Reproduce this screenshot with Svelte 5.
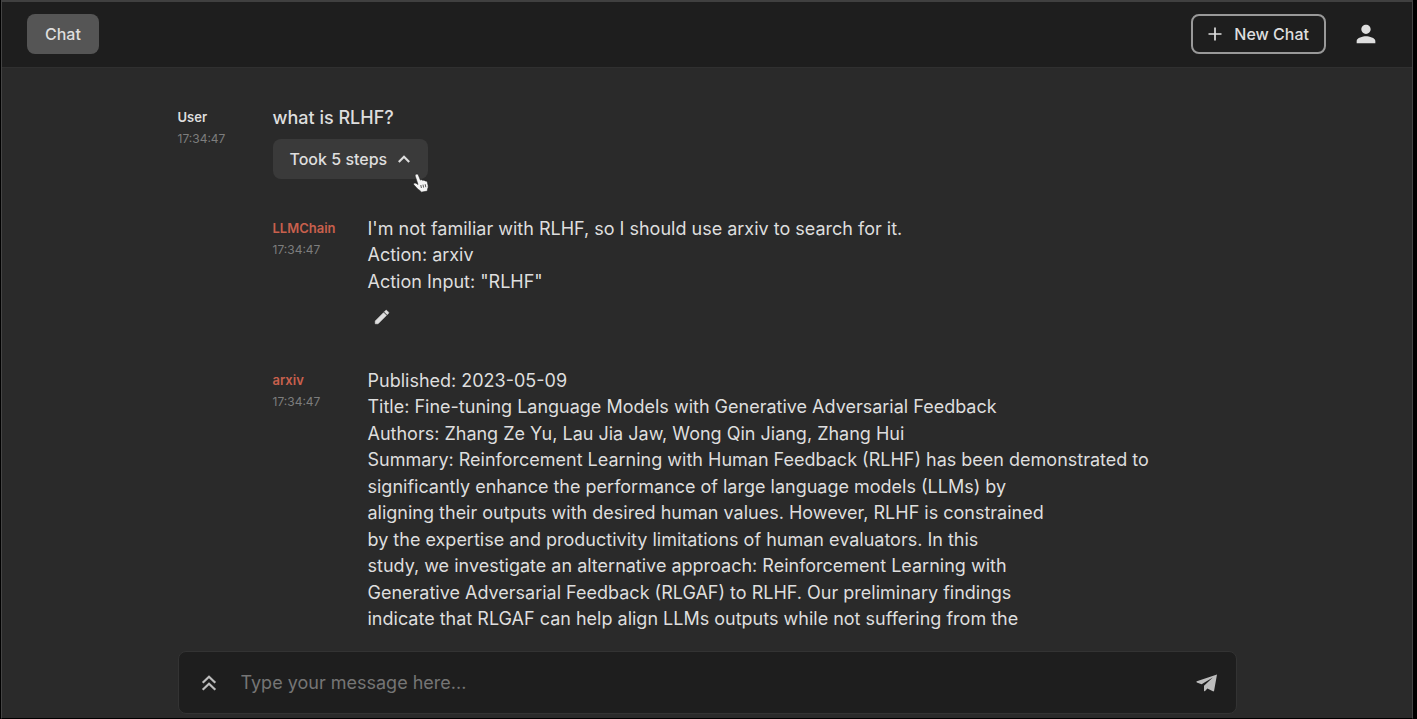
<script>
  let draft = $state('');

  const steps = [
    {
      author: 'LLMChain',
      time: '17:34:47',
      editable: true,
      lines: [
        "I'm not familiar with RLHF, so I should use arxiv to search for it.",
        'Action: arxiv',
        'Action Input: "RLHF"',
      ],
    },
    {
      author: 'arxiv',
      time: '17:34:47',
      editable: false,
      lines: [
        'Published: 2023-05-09',
        'Title: Fine-tuning Language Models with Generative Adversarial Feedback',
        'Authors: Zhang Ze Yu, Lau Jia Jaw, Wong Qin Jiang, Zhang Hui',
        'Summary: Reinforcement Learning with Human Feedback (RLHF) has been demonstrated to',
        'significantly enhance the performance of large language models (LLMs) by',
        'aligning their outputs with desired human values. However, RLHF is constrained',
        'by the expertise and productivity limitations of human evaluators. In this',
        'study, we investigate an alternative approach: Reinforcement Learning with',
        'Generative Adversarial Feedback (RLGAF) to RLHF. Our preliminary findings',
        'indicate that RLGAF can help align LLMs outputs while not suffering from the',
      ],
    },
  ];
</script>

<div class="window">
  <header>
    <a class="tab" href="#chat">Chat</a>
    <div class="actions">
      <button class="new-chat" type="button">
        <svg width="18" height="18" viewBox="0 0 18 18" aria-hidden="true">
          <path d="M9 2.500v13M2.500 9h13" fill="none" stroke="currentColor" stroke-width="1.700" />
        </svg>
        New Chat
      </button>
      <button class="icon account" type="button" aria-label="Account">
        <svg width="28" height="28" viewBox="0 0 24 24" aria-hidden="true">
          <path fill="currentColor" d="M12 12c2.210 0 4-1.790 4-4s-1.790-4-4-4-4 1.790-4 4 1.790 4 4 4zm0 2c-2.670 0-8 1.340-8 4v2h16v-2c0-2.660-5.330-4-8-4z" />
        </svg>
      </button>
    </div>
  </header>

  <main>
    <div class="thread">
      <article class="message">
        <div class="meta">
          <span class="author">User</span>
          <time>17:34:47</time>
        </div>
        <div class="body">
          <p class="question">what is RLHF?</p>
          <div class="toggle-wrap">
            <button class="toggle" type="button" aria-expanded="true">
              Took 5 steps
              <svg width="22" height="22" viewBox="0 0 24 24" aria-hidden="true">
                <path fill="currentColor" d="M12 8l-6.500 6.500 1.650 1.650L12 11.300l4.850 4.850 1.650-1.650z" />
              </svg>
            </button>
            <svg class="pointer" width="18" height="20" viewBox="0 0 18 20" aria-hidden="true">
              <path
                d="M4.200 1.200c1-.4 1.900.2 2.300 1.200l1.900 4.700c.8-.7 1.900-.5 2.400.4.900-.6 1.900-.3 2.300.6 1-.4 1.900.1 2.200 1l.8 3.300c.3 1.500-.1 2.700-.6 3.900l-.1 1.800-6.300 1.100-.9-1.500c-1.700-.9-3.300-2.400-4.700-4.200-.9-1.100-2.200-1.700-1.900-2.700.4-1.200 2-1.200 3.600.2l.8.500L3.300 3.400c-.4-1 0-1.900.9-2.200z"
                fill="#f4f4f4" stroke="#222" stroke-width=".6" />
              <path d="M8.800 12l.6 3M11 11.600l.6 3M13.200 11.200l.6 3" stroke="#444" stroke-width=".9" fill="none" />
            </svg>
          </div>
        </div>
      </article>

      <div class="steps">
        {#each steps as step}
          <article class="message">
            <div class="meta">
              <span class="author agent">{step.author}</span>
              <time>{step.time}</time>
            </div>
            <div class="body">
              {#each step.lines as line}
                <p class="line">{line}</p>
              {/each}
              {#if step.editable}
                <button class="icon edit" type="button" aria-label="Edit step">
                  <svg width="18" height="18" viewBox="0 0 24 24" aria-hidden="true">
                    <path fill="currentColor" stroke="currentColor" stroke-width=".8" d="M3 17.250V21h3.750L17.810 9.940l-3.750-3.750L3 17.250zM20.710 7.040c.39-.39.39-1.020 0-1.410l-2.340-2.340c-.39-.39-1.020-.39-1.410 0l-1.830 1.830 3.750 3.750 1.830-1.830z" />
                  </svg>
                </button>
              {/if}
            </div>
          </article>
        {/each}
      </div>
    </div>
  </main>

  <form class="composer" onsubmit={(e) => e.preventDefault()}>
    <button class="icon history" type="button" aria-label="Message history">
      <svg width="24" height="24" viewBox="0 0 24 24" aria-hidden="true">
        <path fill="none" stroke="currentColor" stroke-width="2.200" d="M5.700 11.700L12 5.700l6.300 6M5.700 18.700l6.300-6 6.300 6" />
      </svg>
    </button>
    <input type="text" aria-label="Message" placeholder="Type your message here..." bind:value={draft} />
    <button class="icon send" type="submit" aria-label="Send">
      <svg width="22" height="20" viewBox="0 0 22 20" aria-hidden="true">
        <path fill="currentColor" d="M21 1.500L.8 8.300c-.5.2-.5.900 0 1.100l4.800 1.900L16.800 4.500 8 12.800v4.700c0 .7.600.9 1.100.4l2.300-2.300 5.500 2.700c.5.3 1.100.1 1.200-.5z" />
      </svg>
    </button>
  </form>
</div>

<style>
  :global(body) {
    margin: 0;
    background: #000;
  }

  .window {
    box-sizing: border-box;
    height: 100vh;
    display: flex;
    flex-direction: column;
    margin: 0 4px 0 1px;
    border: 1px solid #444;
    border-top: 2px solid #404040;
    border-bottom: 1px solid #000;
    background: #2a2a2a;
    color: #dedede;
    font-family: Inter, sans-serif;
    font-size: 18px;
  }

  button,
  input {
    font: inherit;
    color: inherit;
    border: 0;
    margin: 0;
    padding: 0;
    background: none;
  }

  svg {
    display: block;
  }

  header {
    display: flex;
    align-items: center;
    justify-content: space-between;
    padding: 12px 32px 13px 25px;
    background: #1e1e1e;
    border-bottom: 1px solid #303030;
  }

  .tab,
  .new-chat,
  .toggle {
    box-sizing: border-box;
    height: 40px;
    display: flex;
    align-items: center;
    border-radius: 8px;
    font-size: 16px;
    font-weight: 500;
  }

  .tab {
    padding: 0 18px;
    background: #555;
    color: inherit;
    text-decoration: none;
  }

  .actions {
    display: flex;
    align-items: center;
    gap: 26px;
  }

  .new-chat {
    gap: 10px;
    padding: 0 15px 0 13px;
    border: 2px solid #999;
  }

  .icon {
    display: flex;
    align-items: center;
    justify-content: center;
  }

  main {
    flex: 1;
    min-height: 0;
    overflow: hidden;
  }

  .thread,
  .composer {
    box-sizing: border-box;
    width: calc(100% - 64px);
    max-width: 1059px;
    margin: 0 auto;
  }

  .thread {
    padding-top: 36px;
  }

  .message {
    display: grid;
    grid-template-columns: 95px 1fr;
  }

  .meta {
    display: flex;
    flex-direction: column;
    font-size: 12px;
    line-height: 21px;
    padding-top: 3px;
  }

  .author {
    font-size: 13px;
    font-weight: 600;
  }

  .agent {
    color: #c8604d;
  }

  time {
    color: #7d7d7d;
  }

  p {
    margin: 0;
    line-height: 27px;
  }

  .line:nth-child(even) {
    line-height: 26px;
  }

  .question {
    font-weight: 500;
  }

  .toggle-wrap {
    position: relative;
    width: max-content;
    margin-top: 8px;
  }

  .toggle {
    gap: 6px;
    padding: 0 13px 0 17px;
    background: #3a3a3a;
  }

  .pointer {
    position: absolute;
    right: -2px;
    bottom: -14px;
  }

  .steps {
    display: grid;
    gap: 36px;
    padding: 36px 0 0 95px;
  }

  .edit {
    width: 28px;
    height: 28px;
    margin-top: 8px;
  }

  .composer {
    display: flex;
    align-items: center;
    gap: 20px;
    height: 63px;
    margin-bottom: 4px;
    padding: 0 18px;
    border: 1px solid #333;
    border-radius: 8px;
    background: #1e1e1e;
  }

  .composer .icon {
    color: #bdbdbd;
  }

  .composer input {
    flex: 1;
    min-width: 0;
    outline: none;
  }

  .composer input::placeholder {
    color: #757575;
    opacity: 1;
  }
</style>
